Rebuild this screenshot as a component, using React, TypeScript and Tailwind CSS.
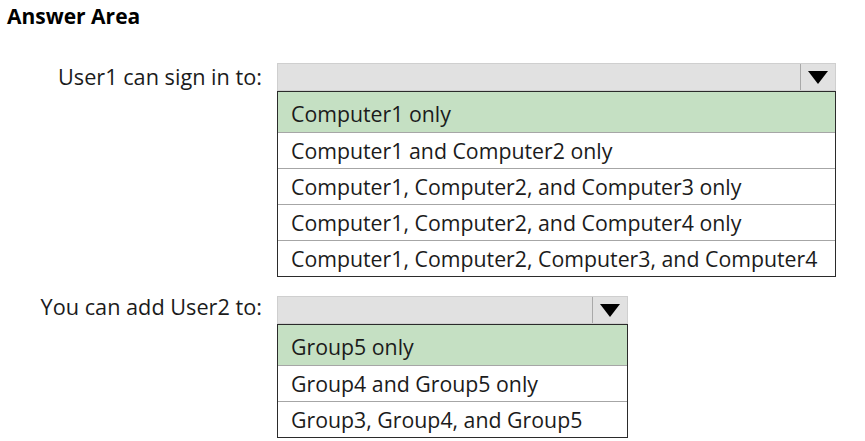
import React from "react";

type TDropdown = {
  label: string;
  width: string;
  labelOffset: string;
  options: string[];
};

const dropdowns: TDropdown[] = [
  {
    label: "User1 can sign in to:",
    width: "w-[559px]",
    labelOffset: "mt-0",
    options: [
      "Computer1 only",
      "Computer1 and Computer2 only",
      "Computer1, Computer2, and Computer3 only",
      "Computer1, Computer2, and Computer4 only",
      "Computer1, Computer2, Computer3, and Computer4",
    ],
  },
  {
    label: "You can add User2 to:",
    width: "w-[351px]",
    labelOffset: "-mt-[3px]",
    options: ["Group5 only", "Group4 and Group5 only", "Group3, Group4, and Group5"],
  },
];

const Arrow = () => (
  <svg width="20" height="13" viewBox="0 0 20 13" className="block">
    <path d="M0 0 H20 L10 13 Z" fill="#000" />
  </svg>
);

const Dropdown = ({ label, width, labelOffset, options }: TDropdown) => (
  <div className="flex items-start">
    <div
      className={`w-[263px] pr-[1px] text-right text-[21.7px] leading-[27px] text-[#1b1b1b] ${labelOffset}`}
    >
      {label}
    </div>
    <div className={`ml-[14px] flex flex-col ${width}`}>
      <div className="flex h-[28px] border border-[#cfcfcf] bg-[#e1e1e1]">
        <div className="flex-1" />
        <div className="flex w-[35px] items-center justify-center border-l border-[#a9a9a9]">
          <Arrow />
        </div>
      </div>
      <div className="flex flex-col border border-[#2b2b2b] bg-white">
        {options.map((option, i) => (
          <div
            key={option}
            className={
              i === 0
                ? "flex h-[40px] items-center bg-[#c5e0c3] pl-[13px] pt-[4px] text-[21.3px] text-[#1b1b1b]"
                : "flex h-[36px] items-center border-t border-[#a6a6a6] pl-[13px] text-[21.3px] text-[#1b1b1b]"
            }
          >
            {option}
          </div>
        ))}
      </div>
    </div>
  </div>
);

const App = () => {
  return (
    <div
      className="flex h-[441px] w-[865px] flex-col bg-white"
      style={{ fontFamily: '"Open Sans", "Noto Sans", sans-serif' }}
    >
      <p className="pl-[7px] pt-[2px] text-[21px] font-bold leading-[28px] text-black">Answer Area</p>
      <div className="mt-[33px] flex flex-col gap-[19px]">
        {dropdowns.map((d) => (
          <Dropdown key={d.label} {...d} />
        ))}
      </div>
    </div>
  );
};

export default App;
